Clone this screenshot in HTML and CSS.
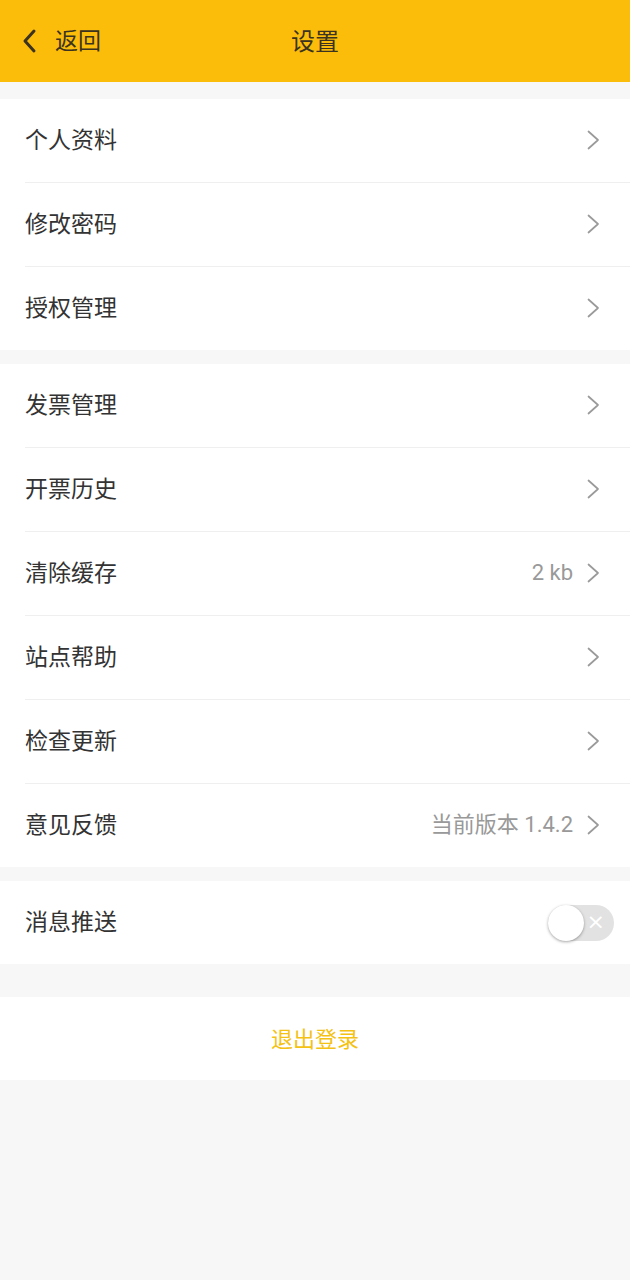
FILE: index.html
```html
<!DOCTYPE html>
<html lang="zh">
<head>
<meta charset="utf-8">
<link rel="stylesheet" href="styles.css">
</head>
<body>
<header class="topbar">
  <div class="back">
    <svg class="back-icon" width="16" height="26" viewBox="0 0 16 26"><path d="M12 3 L3 13 L12 23" fill="none" stroke="#3b3320" stroke-width="3" stroke-linecap="round" stroke-linejoin="round"/></svg>
    <span class="back-text">返回</span>
  </div>
  <div class="title">设置</div>
</header>

<section class="group g1">
  <div class="row"><span class="label">个人资料</span><span class="right"><svg class="chev" viewBox="0 0 13 20"><path d="M1.5 1.5 L11 10 L1.5 18.5"/></svg></span></div>
  <div class="row"><span class="label">修改密码</span><span class="right"><svg class="chev" viewBox="0 0 13 20"><path d="M1.5 1.5 L11 10 L1.5 18.5"/></svg></span></div>
  <div class="row"><span class="label">授权管理</span><span class="right"><svg class="chev" viewBox="0 0 13 20"><path d="M1.5 1.5 L11 10 L1.5 18.5"/></svg></span></div>
</section>

<section class="group g2">
  <div class="row"><span class="label">发票管理</span><span class="right"><svg class="chev" viewBox="0 0 13 20"><path d="M1.5 1.5 L11 10 L1.5 18.5"/></svg></span></div>
  <div class="row"><span class="label">开票历史</span><span class="right"><svg class="chev" viewBox="0 0 13 20"><path d="M1.5 1.5 L11 10 L1.5 18.5"/></svg></span></div>
  <div class="row"><span class="label">清除缓存</span><span class="right"><span class="value">2 kb</span><svg class="chev" viewBox="0 0 13 20"><path d="M1.5 1.5 L11 10 L1.5 18.5"/></svg></span></div>
  <div class="row"><span class="label">站点帮助</span><span class="right"><svg class="chev" viewBox="0 0 13 20"><path d="M1.5 1.5 L11 10 L1.5 18.5"/></svg></span></div>
  <div class="row"><span class="label">检查更新</span><span class="right"><svg class="chev" viewBox="0 0 13 20"><path d="M1.5 1.5 L11 10 L1.5 18.5"/></svg></span></div>
  <div class="row"><span class="label">意见反馈</span><span class="right"><span class="value">当前版本 1.4.2</span><svg class="chev" viewBox="0 0 13 20"><path d="M1.5 1.5 L11 10 L1.5 18.5"/></svg></span></div>
</section>

<section class="group g3">
  <div class="row"><span class="label">消息推送</span>
    <span class="toggle"><span class="knob"></span><span class="x">×</span></span>
  </div>
</section>

<section class="group g4">
  <div class="logout">退出登录</div>
</section>
</body>
</html>
```
FILE: styles.css
```css
* { box-sizing: border-box; }
html, body { margin: 0; padding: 0; }
body {
  background: #f7f7f7;
  font-family: "Noto Sans CJK SC", "Noto Sans", sans-serif;
  width: 630px;
  min-height: 1280px;
}
.topbar {
  height: 82px;
  background: #fcbd0a;
  position: relative;
  display: flex;
  align-items: center;
}
.back {
  display: flex;
  align-items: center;
  padding-left: 22px;
  gap: 17px;
  color: #3b3320;
}
.back-icon { display: block; }
.back-text { font-size: 23px; line-height: 1; padding-bottom: 3px; }
.title {
  position: absolute;
  left: 0; right: 0;
  top: 0; height: 82px;
  padding-bottom: 4px;
  display: flex;
  align-items: center;
  justify-content: center;
  font-size: 24px;
  color: #3b3320;
  pointer-events: none;
}
.group { background: #fff; }
.g1 { margin-top: 17px; }
.g2 { margin-top: 14px; }
.g3 { margin-top: 14px; }
.g4 { margin-top: 33px; }
.row {
  height: 84px;
  margin-left: 25px;
  padding-right: 30px;
  display: flex;
  align-items: center;
  justify-content: space-between;
  border-bottom: 1px solid #efefef;
}
.row:last-child { border-bottom: none; height: 83px; }
.label { font-size: 23px; color: #333; line-height: 1; padding-bottom: 4px; }
.right { display: flex; align-items: center; gap: 14px; }
.value { font-family: Roboto, "Noto Sans CJK SC", sans-serif; font-size: 22px; color: #999; line-height: 1; padding-bottom: 1px; }
.chev {
  display: block;
  width: 13px; height: 20px;
  fill: none;
  stroke: #9a9a9a;
  stroke-width: 1.7;
  stroke-linecap: round;
  stroke-linejoin: round;
  margin-bottom: 2px;
}
.g3 .row { padding-right: 16px; }
.toggle {
  position: relative;
  width: 66px; height: 36px;
  border-radius: 18px;
  background: #e2e2e2;
}
.knob {
  position: absolute;
  left: 0; top: 0;
  width: 36px; height: 36px;
  border-radius: 50%;
  background: #fff;
  box-shadow: 0 1px 3px rgba(0,0,0,0.35);
}
.x {
  position: absolute;
  right: 9px; top: 3px;
  font-size: 22px; line-height: 28px;
  color: #fff;
  font-family: "DejaVu Sans", sans-serif;
}
.logout {
  height: 83px;
  padding-bottom: 4px;
  display: flex;
  align-items: center;
  justify-content: center;
  font-size: 22px;
  color: #f4c214;
}
```
